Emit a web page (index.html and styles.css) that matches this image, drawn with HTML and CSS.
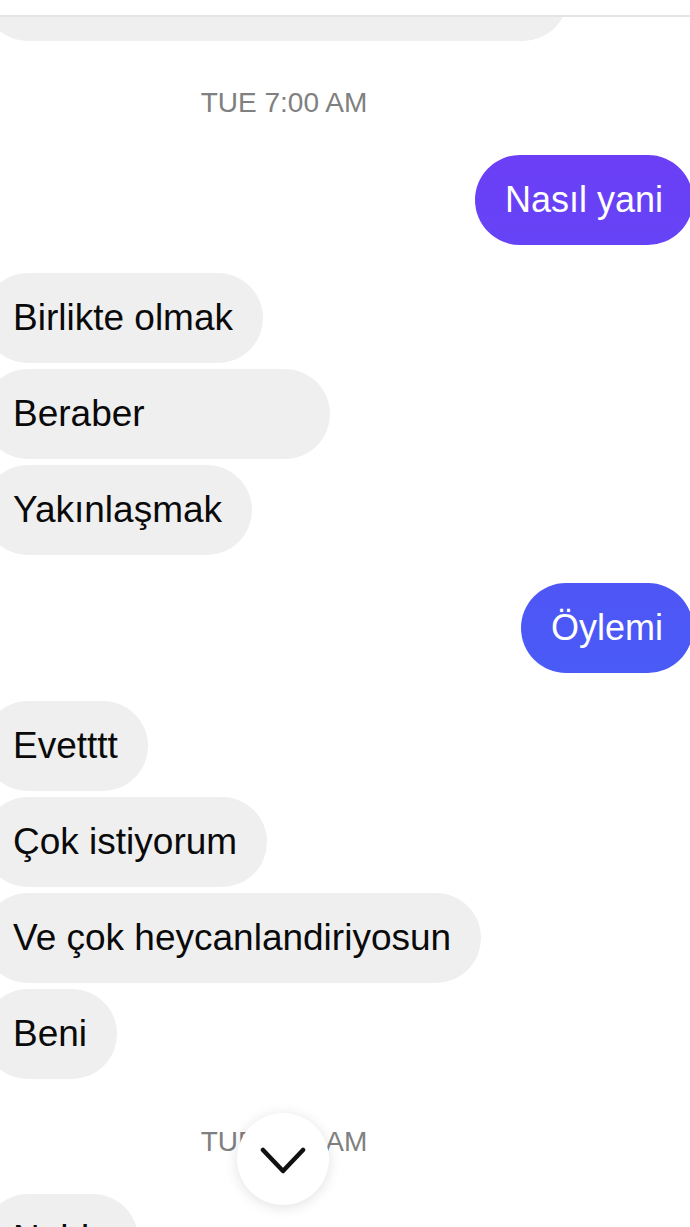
FILE: index.html
```html
<!DOCTYPE html>
<html lang="tr">
<head>
    <meta charset="UTF-8">
    <meta name="viewport" content="width=device-width, initial-scale=1.0">
    <title>Sohbet</title>
    <link rel="stylesheet" href="styles.css">
</head>
<body>

    <div class="top-bar"></div>

    <main class="thread">
        <div class="msg in clipped">&nbsp;</div>

        <div class="stamp">TUE 7:00 AM</div>

        <div class="group">
            <div class="msg out">Nasıl yani</div>
        </div>

        <div class="group">
            <div class="msg in">Birlikte olmak</div>
            <div class="msg in extra">Beraber</div>
            <div class="msg in">Yakınlaşmak</div>
        </div>

        <div class="group">
            <div class="msg out">Öylemi</div>
        </div>

        <div class="group">
            <div class="msg in">Evetttt</div>
            <div class="msg in">Çok istiyorum</div>
            <div class="msg in">Ve çok heycanlandiriyosun</div>
            <div class="msg in">Beni</div>
        </div>

        <div class="stamp">TUE 7:01 AM</div>

        <div class="group">
            <div class="msg in">Nabiz</div>
        </div>
    </main>

    <!-- scroll to newest -->
    <button class="scroll-down" aria-label="Aşağı kaydır">
        <svg width="46" height="28" viewBox="0 0 46 28">
            <path d="M3 3 L23 24 L43 3" fill="none" stroke="#111" stroke-width="4.5" stroke-linecap="round" stroke-linejoin="round"/>
        </svg>
    </button>

</body>
</html>
```

FILE: styles.css
```css
html, body {
    margin: 0;
    padding: 0;
}

body {
    position: relative;
    width: 690px;
    height: 1227px;
    overflow: hidden;
    background-color: #fff;
    font-family: "Liberation Sans", Arial, sans-serif;
    color: #0a0a0a;
}

.top-bar {
    height: 15px;
    border-bottom: 2px solid #e4e4e4;
    position: relative;
    z-index: 2;
    background-color: #fff;
}

.thread {
    display: flex;
    flex-direction: column;
    overflow: hidden;
}

.group {
    display: flex;
    flex-direction: column;
    gap: 6px;
    margin-bottom: 28px;
}

.msg {
    box-sizing: border-box;
    height: 90px;
    padding: 0 30px;
    line-height: 90px;
    font-size: 36px;
    border-radius: 45px;
    white-space: nowrap;
}

.msg.in {
    align-self: flex-start;
    margin-left: -17px;
    font-size: 37px;
    background-color: #efefef;
}

.msg.out {
    align-self: flex-end;
    margin-right: -3px;
    color: #fff;
    background: linear-gradient(180deg, #7636f6 0%, #2479f5 100%) fixed;
}

.msg.extra {
    padding-right: 185px;
}

.msg.clipped {
    width: 585px;
    margin-top: -66px;
}

.stamp {
    margin: 45px 0 35px;
    padding-right: 122px;
    text-align: center;
    font-size: 28px;
    line-height: 34px;
    color: #808080;
}

.group + .stamp {
    margin-top: 18px;
}

.scroll-down {
    position: absolute;
    left: 237px;
    top: 1113px;
    width: 92px;
    height: 92px;
    padding: 0;
    border: none;
    border-radius: 50%;
    background-color: #fff;
    box-shadow: 0 2px 14px rgba(0, 0, 0, 0.12);
    display: flex;
    align-items: center;
    justify-content: center;
    cursor: pointer;
}

.scroll-down svg {
    margin-top: 4px;
}
```
